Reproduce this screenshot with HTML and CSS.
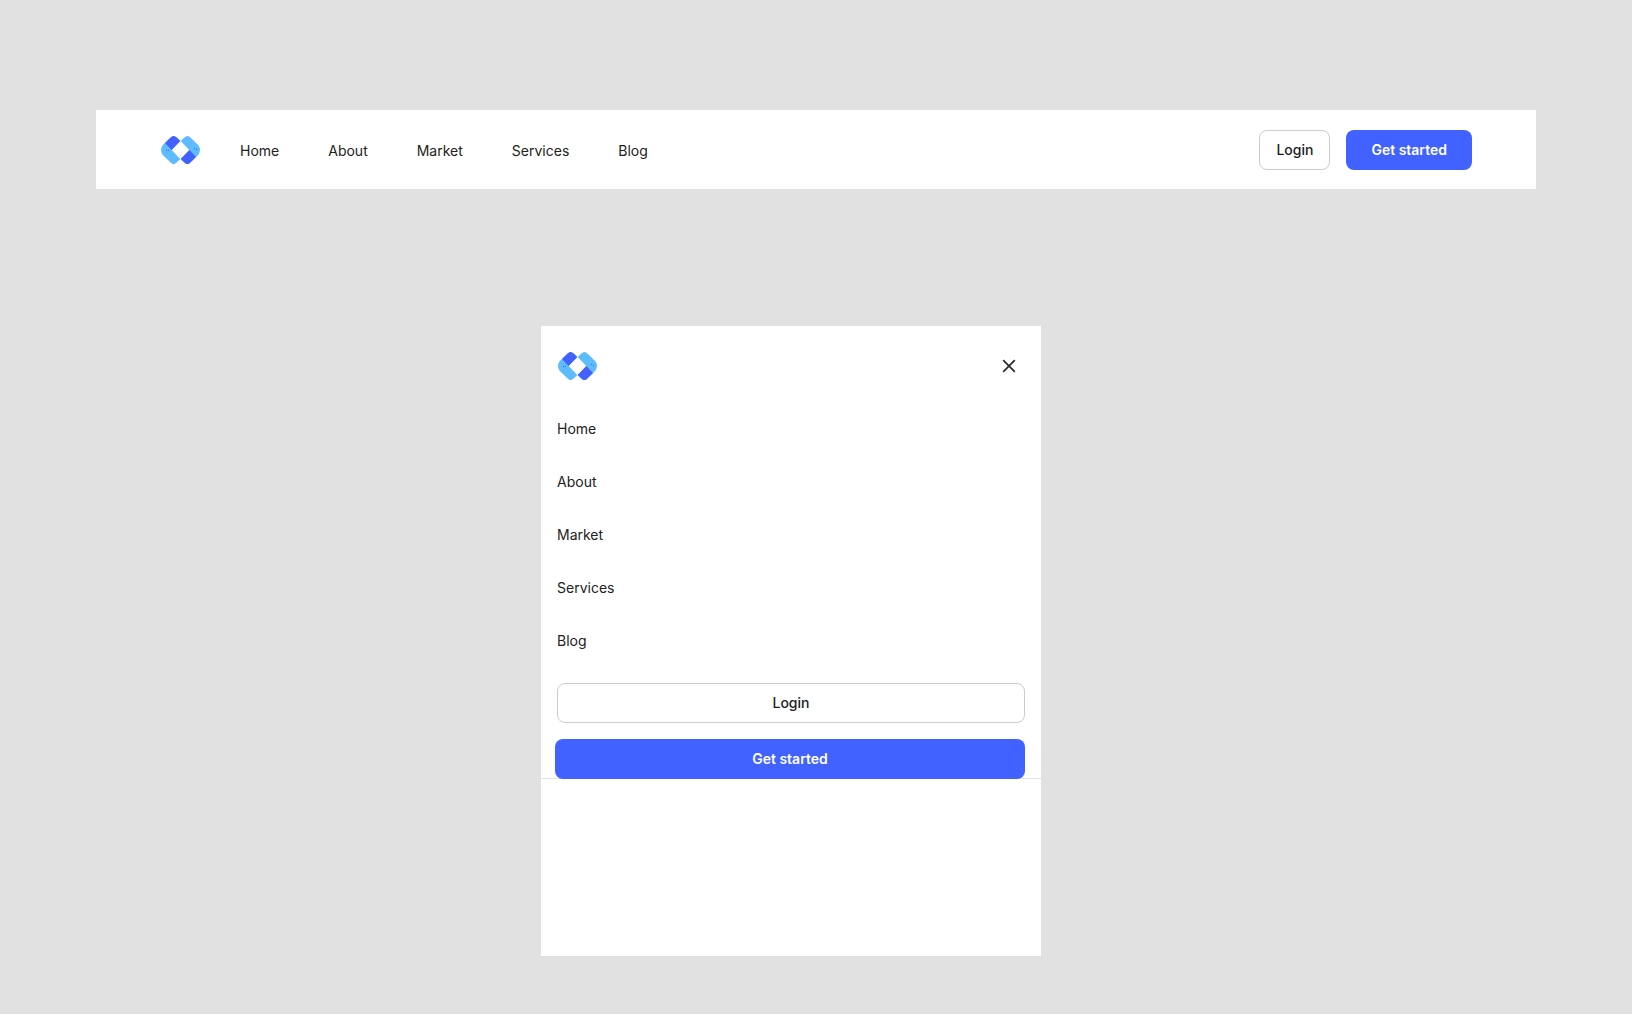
FILE: index.html
```
<!DOCTYPE html>
<html lang="en">
<head>
    <meta charset="UTF-8">
    <meta name="viewport" content="width=device-width, initial-scale=1.0">
    <title>Navbar</title>
    <link rel="stylesheet" href="styles.css">
</head>
<body>
    <!-- Shared logo shape -->
    <svg class="sprite" aria-hidden="true">
        <symbol id="logo" viewBox="0 0 39 28">
            <g id="logo-half">
                <path fill="#5cbcff" d="M9.6 1.6Q12.5-1.6 15.6 1.6L19.3 5.1L10.6 14L19.3 22.9L15.6 26.4Q12.5 29.6 9.6 26.4L1.6 18.8Q-1.6 14 1.6 9.2Z"/>
                <path fill="#4361ff" d="M9.6 1.6Q12.5-1.6 15.6 1.6L19.3 5.1L10.6 14L4 7.1Z"/>
            </g>
            <use href="#logo-half" transform="rotate(180 19.5 14)"/>
            <path fill="#4361ff" d="M5 14h1v1h-1zM7 14h1v1h-1zM33 12h1v1h-1zM35 13h1v1h-1z"/>
        </symbol>
    </svg>

    <!-- Desktop navbar -->
    <header class="navbar">
        <a class="logo" href="#" aria-label="Homepage">
            <svg width="39" height="28"><use href="#logo"/></svg>
        </a>

        <nav class="nav-menu" aria-label="Main">
            <a href="#">Home</a>
            <a href="#">About</a>
            <a href="#">Market</a>
            <a href="#">Services</a>
            <a href="#">Blog</a>
        </nav>

        <div class="nav-actions">
            <button type="button" class="btn btn-outline">Login</button>
            <button type="button" class="btn btn-primary">Get started</button>
        </div>
    </header>

    <!-- Mobile menu -->
    <aside class="mobile-menu">
        <div class="mobile-content">
            <div class="mobile-header">
                <a class="logo" href="#" aria-label="Homepage">
                    <svg width="39" height="28"><use href="#logo"/></svg>
                </a>
                <button type="button" class="close-btn" aria-label="Close menu">
                    <svg width="14" height="14" viewBox="0 0 14 14" fill="none" stroke="#292929" stroke-width="1.7">
                        <path d="M1.2 1.2l11.6 11.6M12.8 1.2L1.2 12.8"/>
                    </svg>
                </button>
            </div>

            <nav class="mobile-nav" aria-label="Mobile">
                <a href="#">Home</a>
                <a href="#">About</a>
                <a href="#">Market</a>
                <a href="#">Services</a>
                <a href="#">Blog</a>
            </nav>

            <div class="mobile-actions">
                <button type="button" class="btn btn-outline">Login</button>
                <button type="button" class="btn btn-primary">Get started</button>
            </div>
        </div>
    </aside>
</body>
</html>
```
FILE: styles.css
```
/* Base Styles */
* {
    box-sizing: border-box;
}

body {
    font-family: 'Inter', sans-serif;
    font-size: 14px;
    line-height: 21px;
    margin: 0;
    padding: 110px 96px 58px;
    background-color: #e1e1e1;
    color: #222;
}

a {
    color: inherit;
    text-decoration: none;
}

.sprite {
    position: absolute;
    width: 0;
    height: 0;
}

.logo svg {
    display: block;
}

/* Buttons */
.btn {
    height: 40px;
    padding: 0 16px 2px;
    border: 1px solid transparent;
    border-radius: 8px;
    font-family: inherit;
    font-size: 14px;
    font-weight: 500;
    cursor: pointer;
}

.btn-outline {
    background-color: white;
    border-color: #c8cad8;
    color: #1b1b1f;
}

.btn-primary {
    padding: 0 24px 2px;
    background-color: #4162ff;
    color: white;
    font-weight: 600;
}

/* Desktop navbar */
.navbar {
    display: flex;
    align-items: center;
    padding: 20px 64px 19px 65px;
    background-color: white;
}

.nav-menu {
    display: flex;
    gap: 49px;
    margin-left: 40px;
}

.nav-actions {
    display: flex;
    gap: 16px;
    margin-left: auto;
}

/* Mobile menu */
.mobile-menu {
    width: 500px;
    max-width: 100%;
    min-height: 630px;
    margin: 137px auto 0;
    background-color: white;
}

/* The menu sits left of the centre line */
@media (min-width: 900px) {
    .mobile-menu {
        margin-right: calc(50% - 225px);
    }
}

.mobile-content {
    border-bottom: 1px solid #e1e1e1;
}

.mobile-header {
    display: flex;
    align-items: center;
    justify-content: space-between;
    padding: 24px 16px 20px 17px;
}

.close-btn {
    display: flex;
    padding: 9px;
    border: none;
    background: transparent;
    cursor: pointer;
}

.mobile-nav {
    display: flex;
    flex-direction: column;
    padding: 0 16px;
}

.mobile-nav a {
    padding: 16px 0;
}

.mobile-actions {
    display: flex;
    flex-direction: column;
    gap: 16px;
    margin-bottom: -1px;
    padding: 16px 16px 0;
}

/* Filled button is slightly wider than the outlined one */
.mobile-actions .btn-primary {
    margin-left: -2px;
}
```
